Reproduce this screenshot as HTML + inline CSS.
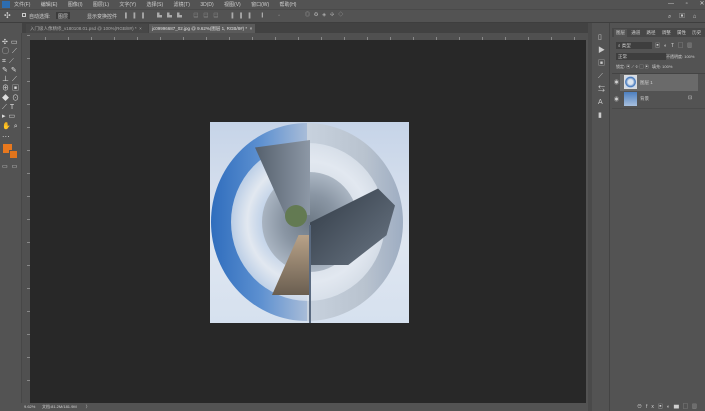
<!DOCTYPE html>
<html><head><meta charset="utf-8"><style>
*{margin:0;padding:0;box-sizing:border-box}
body{width:705px;height:411px;background:#535353;position:relative;overflow:hidden;font-family:"Liberation Sans","Noto Sans CJK SC",sans-serif;font-size:5px;color:#ccc}
.a{position:absolute}
.t{position:absolute;white-space:nowrap;font-size:5px;color:#d0d0d0}
</style></head><body>
<!-- menu -->
<div class="a" style="left:0;top:0;width:705px;height:9px;background:#535353"></div>
<div class="a" style="left:2px;top:1px;width:8px;height:7px;background:#2d6db0"></div>
<div class="t" style="left:14px;top:1px;word-spacing:9px">文件(F) 编辑(E) 图像(I) 图层(L) 文字(Y) 选择(S) 滤镜(T) 3D(D) 视图(V) 窗口(W) 帮助(H)</div>
<div class="t" style="left:668px;top:0px;font-size:6px;word-spacing:10px">— ▫ ✕</div>
<!-- options -->
<div class="a" style="left:0;top:9px;width:705px;height:14px;background:#535353;border-top:1px solid #4a4a4a;border-bottom:1px solid #3e3e3e"></div>
<div class="t" style="left:4px;top:11px;font-size:8px">✣</div>
<div class="a" style="left:22px;top:13px;width:4px;height:4px;border:1px solid #ccc"></div>
<div class="t" style="left:29px;top:13px">自动选择:</div>
<div class="a" style="left:56px;top:12px;width:14px;height:7px;background:#3c3c3c"></div>
<div class="t" style="left:58px;top:13px">图层</div>
<div class="t" style="left:87px;top:13px">显示变换控件</div>
<div class="t" style="left:125px;top:12px;letter-spacing:5px;color:#aaa">▌▌▌ ▙▙▙ ▤▤▤ ▐▐▐ ▎ ▫</div>
<div class="t" style="left:305px;top:11px;letter-spacing:4px;color:#aaa">◎✪◈✣◇</div>
<div class="t" style="left:668px;top:11px;letter-spacing:3px;color:#ccc;font-size:6px">⌕ ▣ ⌂</div>
<!-- tabs -->
<div class="a" style="left:22px;top:23px;width:570px;height:10px;background:#424242"></div>
<div class="a" style="left:26px;top:24px;width:122px;height:9px;background:#474747"></div>
<div class="t" style="left:30px;top:26px;color:#aaa;font-size:4.5px">入门级人像精修_v180108.01.psd @ 100%(RGB/8#) *&nbsp;&nbsp;×</div>
<div class="a" style="left:149px;top:24px;width:106px;height:9px;background:#5a5a5a"></div>
<div class="t" style="left:152px;top:26px;font-size:4.5px;color:#e0e0e0">jc09996687_02.jpg @ 9.62%(图层 1, RGB/8#) *&nbsp;&nbsp;×</div>
<!-- rulers -->
<div class="a" style="left:22px;top:33px;width:568px;height:7px;background:#505050;background-image:repeating-linear-gradient(90deg,#888 0 1px,transparent 1px 23px);background-size:100% 3px;background-repeat:no-repeat;background-position:0 4px"></div>
<div class="a" style="left:22px;top:33px;width:8px;height:371px;background:#505050;background-image:repeating-linear-gradient(0deg,#888 0 1px,transparent 1px 23px);background-size:3px 100%;background-repeat:no-repeat;background-position:5px 0"></div>
<!-- canvas -->
<div class="a" style="left:30px;top:40px;width:556px;height:363px;background:#282828"></div>
<!-- image -->
<div class="a" style="left:210px;top:122px;width:199px;height:201px;background:linear-gradient(180deg,#c6d4e8,#dfe6f0 60%,#d6e1ef)"></div>
<div class="a" style="left:211px;top:123px;width:192px;height:198px;border-radius:50%;background:linear-gradient(90deg,#2f6dbd 0,#5b8fd0 25%,#a8bcd8 50%,#c8d2de 50%,#b9c3cf 80%,#9eadc2 100%)"></div>
<div class="a" style="left:231px;top:143px;width:154px;height:158px;border-radius:50%;background:radial-gradient(circle,transparent 0,#e2e8f0 55%,rgba(220,228,238,.6) 80%,transparent 100%)"></div>
<div class="a" style="left:262px;top:172px;width:96px;height:100px;border-radius:50%;background:radial-gradient(circle,#6e7a86 0,#8a96a4 40%,#aab5c2 70%,rgba(200,210,222,0) 100%)"></div>
<div class="a" style="left:255px;top:140px;width:55px;height:75px;background:linear-gradient(90deg,#55606d,#8d98a6);clip-path:polygon(0 10%,100% 0,100% 100%,55% 100%)"></div>
<div class="a" style="left:310px;top:180px;width:85px;height:85px;background:linear-gradient(135deg,#2f3843,#6a7684);clip-path:polygon(0 50%,80% 10%,100% 30%,90% 65%,45% 100%,0 100%)"></div>
<div class="a" style="left:285px;top:205px;width:22px;height:22px;border-radius:50%;background:#637a52"></div>
<div class="a" style="left:272px;top:235px;width:38px;height:60px;background:linear-gradient(180deg,#b8a288,#6a5e50);clip-path:polygon(70% 0,100% 0,100% 100%,0 100%)"></div>
<div class="a" style="left:309px;top:225px;width:2px;height:98px;background:#5a6a80"></div>
<!-- left toolbar -->
<div class="a" style="left:0;top:33px;width:22px;height:370px;background:#535353;border-right:1px solid #474747"></div>
<div class="t" style="left:2px;top:38px;font-size:7px;line-height:9.3px;color:#ddd;letter-spacing:3px;white-space:pre">✣▭
◯⟋
⌗⟋
✎✎
⊥⟋
⊕▣
◆⊙
⟋T
▸▭
✋⌕
⋯</div>
<div class="a" style="left:3px;top:144px;width:9px;height:9px;background:#e8781e"></div>
<div class="a" style="left:9px;top:150px;width:9px;height:9px;background:#e0741c;border:1px solid #535353"></div>
<div class="t" style="left:2px;top:163px;font-size:6px;letter-spacing:4px">▭▭</div>
<!-- status -->
<div class="a" style="left:0;top:403px;width:592px;height:8px;background:#535353"></div>
<div class="t" style="left:24px;top:404px;font-size:4px">9.62%</div>
<div class="t" style="left:42px;top:404px;font-size:4px">文档:81.2M/181.9M&nbsp;&nbsp;&nbsp;&nbsp;&nbsp;&nbsp;&nbsp;&nbsp;〉</div>
<!-- right -->
<div class="a" style="left:588px;top:23px;width:4px;height:388px;background:#4a4a4a"></div>
<div class="a" style="left:592px;top:23px;width:18px;height:388px;background:#535353;border-right:1px solid #444"></div>
<div class="t" style="left:598px;top:31px;font-size:7px;line-height:13px;white-space:pre;color:#ccc">▯
▶
▣
⟋
⇆
A
▮
</div>
<div class="a" style="left:612px;top:23px;width:93px;height:388px;background:#535353"></div>
<div class="a" style="left:612px;top:28px;width:93px;height:9px;background:#474747"></div>
<div class="a" style="left:614px;top:29px;width:13px;height:8px;background:#535353"></div>
<div class="t" style="left:616px;top:30px;font-size:4.5px;word-spacing:5px">图层 通道 路径 调整 属性 历史</div>
<div class="a" style="left:616px;top:42px;width:36px;height:7px;background:#3e3e3e"></div>
<div class="t" style="left:618px;top:43px;font-size:4.5px">⌕ 类型</div>
<div class="t" style="left:655px;top:42px;font-size:5px;letter-spacing:4px">▣◐T▢▥</div>
<div class="a" style="left:616px;top:53px;width:50px;height:7px;background:#3e3e3e"></div>
<div class="t" style="left:618px;top:54px;font-size:4.5px">正常</div>
<div class="t" style="left:666px;top:54px;font-size:4px">不透明度: 100%</div>
<div class="t" style="left:616px;top:64px;font-size:4px">锁定: ▣ ⟋ ✣ ▢ ▣&nbsp;&nbsp;&nbsp;填充: 100%</div>
<div class="a" style="left:612px;top:73px;width:93px;height:1px;background:#444"></div>
<div class="a" style="left:620px;top:74px;width:78px;height:17px;background:#6a6a6a"></div>
<div class="t" style="left:614px;top:79px;font-size:5px">◉</div>
<div class="a" style="left:624px;top:75px;width:13px;height:14px;background:radial-gradient(circle,#dde6f0 30%,#3a70b8 60%,#cfdbea 70%);border:1px solid #ddd"></div>
<div class="t" style="left:640px;top:80px;font-size:4.5px">图层 1</div>
<div class="t" style="left:614px;top:96px;font-size:5px">◉</div>
<div class="a" style="left:624px;top:92px;width:13px;height:14px;background:linear-gradient(#4d7fc0,#a8c0de)"></div>
<div class="t" style="left:640px;top:96px;font-size:4.5px">背景</div>
<div class="t" style="left:688px;top:95px;font-size:5px">⊡</div>
<div class="a" style="left:612px;top:108px;width:93px;height:1px;background:#4a4a4a"></div>
<div class="t" style="left:637px;top:403px;font-size:5px;letter-spacing:4px">⊖fx▣◐▆▢▥</div>
</body></html>
